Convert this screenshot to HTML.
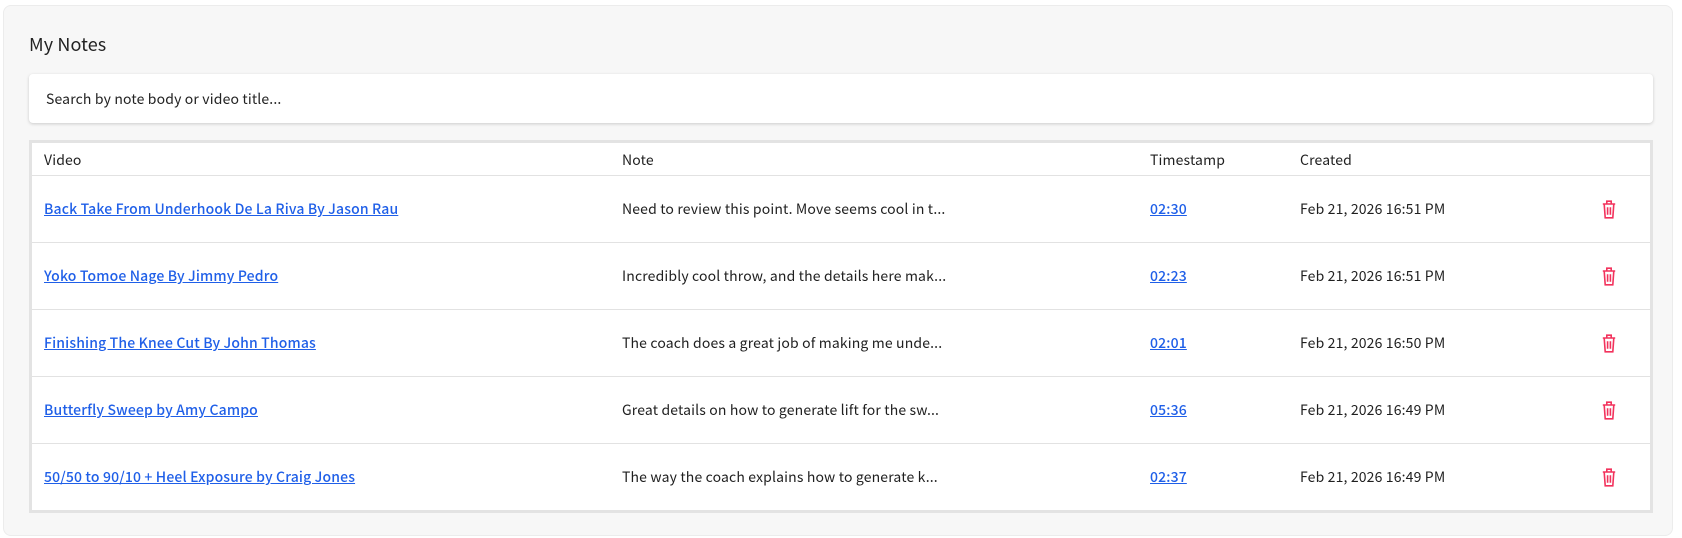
<!DOCTYPE html>
<html><head><style>
*{box-sizing:border-box;margin:0;padding:0}
body{width:1682px;height:538px;background:#fff;font-family:"Noto Sans CJK JP","DejaVu Sans",sans-serif;color:#1f1f1f;overflow:hidden;position:relative}
.panel{position:absolute;left:3px;top:5px;width:1670px;height:531px;background:#f7f7f7;border:1px solid #ececec;border-radius:8px}
h1{position:absolute;left:29px;top:31px;font-size:18px;font-weight:400;color:#222;letter-spacing:0.1px}
.search{position:absolute;left:29px;top:74px;width:1624px;height:49px;background:#fff;border-radius:4px;box-shadow:0 1px 3px rgba(0,0,0,.18);font-size:14px;padding-left:17px;line-height:51px;color:#222;letter-spacing:0.15px}
.table{position:absolute;left:29px;top:140px;width:1624px;height:373px;border:3px solid #e3e3e3;background:#fff}
.row{position:absolute;left:0;width:1618px;border-bottom:1px solid #e2e2e2;font-size:14px;letter-spacing:0.15px}
.row span{position:absolute;white-space:nowrap}
a{color:#1f5fe8;text-decoration:underline;font-weight:500}
.c1{left:12px}.c2{left:590px}.c3{left:1118px}.c4{left:1268px}
.r{position:absolute;left:32px;width:1618px;height:67px;border-bottom:1px solid #e2e2e2;font-size:14px;line-height:67px;letter-spacing:0.15px}.r span{position:absolute;white-space:nowrap}.r svg{position:absolute;left:1570px;top:24px}
</style></head><body>
<div class="panel"></div>
<h1>My Notes</h1>
<div class="search">Search by note body or video title...</div>
<div class="table">
<div class="row" style="top:0;height:33px;line-height:34px"><span class="c1">Video</span><span class="c2">Note</span><span class="c3">Timestamp</span><span class="c4">Created</span></div>
</div>
<div class="r" style="top:176px"><span class="c1"><a>Back Take From Underhook De La Riva By Jason Rau</a></span><span class="c2">Need to review this point. Move seems cool in t...</span><span class="c3"><a>02:30</a></span><span class="c4">Feb 21, 2026 16:51 PM</span><svg width="14" height="19" viewBox="0 0 14 19" fill="none" stroke="#f2325c" stroke-width="1.6"><path d="M0.8 4h12.4M4.8 4V1.2h4.4V4M2.2 4l1 13.8h7.6l1-13.8M5.6 7.2v7.6M8.4 7.2v7.6"/></svg></div>
<div class="r" style="top:243px"><span class="c1"><a>Yoko Tomoe Nage By Jimmy Pedro</a></span><span class="c2">Incredibly cool throw, and the details here mak...</span><span class="c3"><a>02:23</a></span><span class="c4">Feb 21, 2026 16:51 PM</span><svg width="14" height="19" viewBox="0 0 14 19" fill="none" stroke="#f2325c" stroke-width="1.6"><path d="M0.8 4h12.4M4.8 4V1.2h4.4V4M2.2 4l1 13.8h7.6l1-13.8M5.6 7.2v7.6M8.4 7.2v7.6"/></svg></div>
<div class="r" style="top:310px"><span class="c1"><a>Finishing The Knee Cut By John Thomas</a></span><span class="c2">The coach does a great job of making me unde...</span><span class="c3"><a>02:01</a></span><span class="c4">Feb 21, 2026 16:50 PM</span><svg width="14" height="19" viewBox="0 0 14 19" fill="none" stroke="#f2325c" stroke-width="1.6"><path d="M0.8 4h12.4M4.8 4V1.2h4.4V4M2.2 4l1 13.8h7.6l1-13.8M5.6 7.2v7.6M8.4 7.2v7.6"/></svg></div>
<div class="r" style="top:377px"><span class="c1"><a>Butterfly Sweep by Amy Campo</a></span><span class="c2">Great details on how to generate lift for the sw...</span><span class="c3"><a>05:36</a></span><span class="c4">Feb 21, 2026 16:49 PM</span><svg width="14" height="19" viewBox="0 0 14 19" fill="none" stroke="#f2325c" stroke-width="1.6"><path d="M0.8 4h12.4M4.8 4V1.2h4.4V4M2.2 4l1 13.8h7.6l1-13.8M5.6 7.2v7.6M8.4 7.2v7.6"/></svg></div>
<div class="r" style="top:444px;border-bottom:none"><span class="c1"><a>50/50 to 90/10 + Heel Exposure by Craig Jones</a></span><span class="c2">The way the coach explains how to generate k...</span><span class="c3"><a>02:37</a></span><span class="c4">Feb 21, 2026 16:49 PM</span><svg width="14" height="19" viewBox="0 0 14 19" fill="none" stroke="#f2325c" stroke-width="1.6"><path d="M0.8 4h12.4M4.8 4V1.2h4.4V4M2.2 4l1 13.8h7.6l1-13.8M5.6 7.2v7.6M8.4 7.2v7.6"/></svg></div>
</body></html>
